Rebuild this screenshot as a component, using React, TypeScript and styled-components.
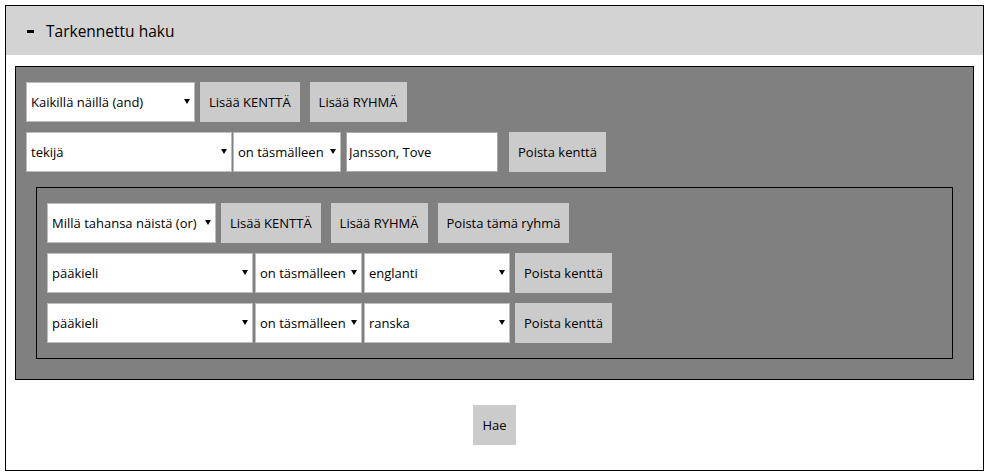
import React from 'react';
import styled, { createGlobalStyle } from 'styled-components';

const GlobalStyle = createGlobalStyle`
  html, body {
    margin: 0;
    padding: 0;
    background: #fff;
  }
  body {
    font-family: "Open Sans", "Liberation Sans", sans-serif;
    font-size: 13px;
    color: #000;
  }
  * {
    box-sizing: border-box;
  }
`;

const Page = styled.div`
  padding: 5px 0 0 5px;
`;

const Frame = styled.div`
  width: 979px;
  border: 1px solid #000;
  background: #fff;
`;

const Header = styled.div`
  height: 49px;
  background: #d3d3d3;
  display: flex;
  align-items: center;
  padding-left: 21px;
  gap: 12px;
`;

const Minus = styled.span`
  display: block;
  width: 7px;
  height: 3px;
  background: #000;
  margin-top: 2px;
`;

const Title = styled.h2`
  margin: 0;
  font-size: 15.5px;
  font-weight: 400;
  color: #000;
`;

const Panel = styled.div`
  margin: 11px 9px 0;
  border: 1px solid #000;
  background: #808080;
  padding: 15px 10px 20px;
  display: flex;
  flex-direction: column;
  gap: 10px;
`;

const Group = styled.div`
  margin: 5px 10px 0;
  border: 1px solid #000;
  padding: 15px 10px;
  display: flex;
  flex-direction: column;
  gap: 10px;
`;

const Row = styled.div`
  display: flex;
  height: 40px;
`;

const SelectWrap = styled.div<{ $width: number; $mr: number }>`
  position: relative;
  width: ${p => p.$width}px;
  margin-right: ${p => p.$mr}px;
  flex: none;

  &::after {
    content: '';
    position: absolute;
    right: 5px;
    top: 50%;
    margin-top: -3px;
    border-left: 3px solid transparent;
    border-right: 3px solid transparent;
    border-top: 5px solid #000;
    pointer-events: none;
  }
`;

const NativeSelect = styled.select`
  appearance: none;
  -webkit-appearance: none;
  width: 100%;
  height: 100%;
  margin: 0;
  border: 1px solid #bdbdbd;
  border-radius: 0;
  background: #fff;
  padding: 0 14px 0 4px;
  font: inherit;
  color: #000;
  outline: none;
`;

const TextInput = styled.input<{ $width: number; $mr: number }>`
  width: ${p => p.$width}px;
  margin: 0 ${p => p.$mr}px 0 0;
  height: 100%;
  border: 1px solid #a9a9a9;
  border-radius: 0;
  background: #fff;
  padding: 0 2px;
  font: inherit;
  color: #000;
  outline: none;
`;

const Button = styled.button<{ $mr?: number }>`
  flex: none;
  height: 40px;
  margin: 0 ${p => p.$mr ?? 0}px 0 0;
  padding: 0 9px;
  border: none;
  border-radius: 0;
  background: #cbcbcb;
  font: inherit;
  color: #000;
  cursor: pointer;
`;

const Footer = styled.div`
  display: flex;
  justify-content: center;
  padding: 25px 0;
`;

interface SelectProps {
  width: number;
  mr?: number;
  value: string;
}

function Select({ width, mr = 0, value }: SelectProps) {
  return (
    <SelectWrap $width={width} $mr={mr}>
      <NativeSelect defaultValue={value}>
        <option>{value}</option>
      </NativeSelect>
    </SelectWrap>
  );
}

function FieldRow({ lang }: { lang: string }) {
  return (
    <Row>
      <Select width={206} mr={2} value="pääkieli" />
      <Select width={107} mr={2} value="on täsmälleen" />
      <Select width={146} mr={5} value={lang} />
      <Button>Poista kenttä</Button>
    </Row>
  );
}

export default function App() {
  return (
    <>
      <GlobalStyle />
      <Page>
        <Frame>
          <Header>
            <Minus />
            <Title>Tarkennettu haku</Title>
          </Header>

          <Panel>
            <Row>
              <Select width={169} mr={5} value="Kaikillä näillä (and)" />
              <Button $mr={10}>Lisää KENTTÄ</Button>
              <Button>Lisää RYHMÄ</Button>
            </Row>
            <Row>
              <Select width={206} mr={1} value="tekijä" />
              <Select width={108} mr={5} value="on täsmälleen" />
              <TextInput $width={152} $mr={11} defaultValue="Jansson, Tove" />
              <Button>Poista kenttä</Button>
            </Row>

            <Group>
              <Row>
                <Select width={169} mr={5} value="Millä tahansa näistä (or)" />
                <Button $mr={10}>Lisää KENTTÄ</Button>
                <Button $mr={10}>Lisää RYHMÄ</Button>
                <Button>Poista tämä ryhmä</Button>
              </Row>
              <FieldRow lang="englanti" />
              <FieldRow lang="ranska" />
            </Group>
          </Panel>

          <Footer>
            <Button>Hae</Button>
          </Footer>
        </Frame>
      </Page>
    </>
  );
}
